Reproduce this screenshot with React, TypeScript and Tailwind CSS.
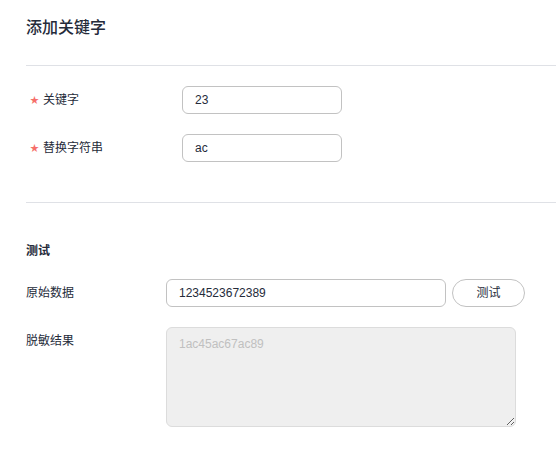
import React from "react";

const font = { fontFamily: '"Liberation Sans", "Noto Sans CJK SC", sans-serif' };

const Required = () => <span className="mr-[4px] text-[9px] leading-none text-[#f66f6a]">★</span>;

const App = () => {
    return (
        <div className="min-h-screen bg-white pl-[26px] text-[12px] text-[#252b3a] font-['Liberation_Sans','Noto_Sans_CJK_SC',sans-serif]">
            <h2 className="pt-[16px] text-[16px] leading-[24px] font-medium text-[#252b3a]">添加关键字</h2>
            <div className="mt-[25px] h-px bg-[#dfe1e6]" />

            <div className="mt-[20px] flex flex-col gap-[20px]">
                <div className="flex items-center">
                    <label className="flex w-[156px] items-center pl-[4px]">
                        <Required />
                        关键字
                    </label>
                    <input
                        defaultValue="23"
                        className="h-[28px] w-[160px] rounded-[6px] border border-[#c2c2c2] px-[12px] text-[12px] text-[#252b3a] outline-none"
                    />
                </div>
                <div className="flex items-center">
                    <label className="flex w-[156px] items-center pl-[4px]">
                        <Required />
                        替换字符串
                    </label>
                    <input
                        defaultValue="ac"
                        className="h-[28px] w-[160px] rounded-[6px] border border-[#c2c2c2] px-[12px] text-[12px] text-[#252b3a] outline-none"
                    />
                </div>
            </div>

            <div className="mt-[40px] h-px bg-[#dfe1e6]" />

            <h3 className="mt-[39px] text-[12px] leading-[18px] font-bold">测试</h3>

            <div className="mt-[19px] flex items-center">
                <label className="w-[140px]">原始数据</label>
                <input
                    defaultValue="1234523672389"
                    className="h-[28px] w-[280px] rounded-[6px] border border-[#c2c2c2] px-[12px] text-[12px] text-[#252b3a] outline-none"
                />
                <button className="ml-[6px] h-[28px] w-[73px] rounded-full border border-[#c2c2c2] bg-white text-[12px] text-[#252b3a]">
                    测试
                </button>
            </div>

            <div className="mt-[20px] flex items-start">
                <label className="w-[140px] pt-[5px] leading-[18px]">脱敏结果</label>
                <textarea
                    disabled
                    value="1ac45ac67ac89"
                    readOnly
                    style={font}
                    className="h-[100px] w-[350px] rounded-[6px] border border-[#dcdcdc] bg-[#efefef] px-[12px] py-[8px] text-[12px] leading-[16px] text-[#c0c0c0] outline-none"
                />
            </div>
        </div>
    );
};

export default App;
